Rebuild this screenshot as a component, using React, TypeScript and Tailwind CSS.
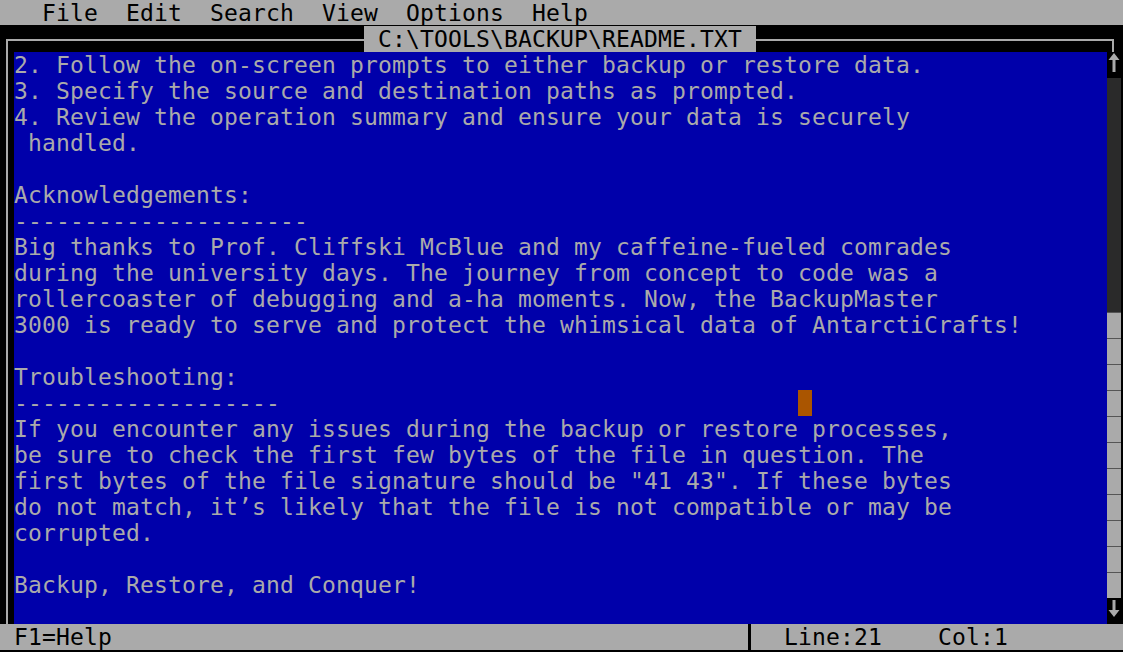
import React from 'react';

const GRAY = 'bg-[#aaaaaa]';

const LINES: string[] = [
  '2. Follow the on-screen prompts to either backup or restore data.',
  '3. Specify the source and destination paths as prompted.',
  '4. Review the operation summary and ensure your data is securely',
  ' handled.',
  '',
  'Acknowledgements:',
  '---------------------',
  'Big thanks to Prof. Cliffski McBlue and my caffeine-fueled comrades',
  'during the university days. The journey from concept to code was a',
  'rollercoaster of debugging and a-ha moments. Now, the BackupMaster',
  '3000 is ready to serve and protect the whimsical data of AntarctiCrafts!',
  '',
  'Troubleshooting:',
  '-------------------',
  'If you encounter any issues during the backup or restore processes,',
  'be sure to check the first few bytes of the file in question. The',
  'first bytes of the file signature should be "41 43". If these bytes',
  'do not match, it’s likely that the file is not compatible or may be',
  'corrupted.',
  '',
  'Backup, Restore, and Conquer!',
  '',
];

const CURSOR_ROW = 13;
const CURSOR_COL = 56;

function ArrowUp() {
  return (
    <svg width="14" height="26" viewBox="0 0 14 26" className="block">
      <polygon points="7,1 12.5,8 1.5,8" fill="#aaaaaa" />
      <rect x="5.5" y="7" width="3" height="13" fill="#aaaaaa" />
    </svg>
  );
}

function ArrowDown() {
  return (
    <svg width="14" height="26" viewBox="0 0 14 26" className="block">
      <rect x="5.5" y="2" width="3" height="11" fill="#aaaaaa" />
      <polygon points="7,19 12.5,12 1.5,12" fill="#aaaaaa" />
    </svg>
  );
}

export default function App() {
  const font = "font-['DejaVu_Sans_Mono','Liberation_Mono',monospace] text-[23px] tracking-[0.153px] leading-[26px] whitespace-pre";

  return (
    <div className={`w-[1123px] h-[652px] bg-black overflow-hidden ${font}`}>
      {/* menu bar */}
      <div className={`h-[26px] ${GRAY} text-black border-b border-black`}>
        <div className="h-[26px]">{'   File  Edit  Search  View  Options  Help'}</div>
      </div>

      {/* title row with window frame */}
      <div className="flex h-[26px]">
        <div className="w-[6px]" />
        <div className="w-[358px] h-[13px] mt-[13px] border-t-2 border-l-2 border-[#aaaaaa]" />
        <div className={`w-[392px] h-[26px] ${GRAY} text-black`}>{' C:\\TOOLS\\BACKUP\\README.TXT '}</div>
        <div className="w-[358px] h-[13px] mt-[13px] border-t-2 border-r-2 border-[#aaaaaa]" />
        <div className="w-[9px]" />
      </div>

      {/* editor body */}
      <div className="flex h-[572px]">
        <div className="w-[6px]" />
        <div className={`w-[2px] ${GRAY}`} />
        <div className="w-[6px]" />
        <div className="w-[1093px] bg-[#0000aa] text-[#aaaaaa] overflow-hidden">
          {LINES.map((line, i) => (
            <div key={i} className="h-[26px]">
              {i === CURSOR_ROW ? (
                <>
                  {line.padEnd(CURSOR_COL, ' ')}
                  <span className="inline-block w-[14px] h-[26px] align-top bg-[#aa5500]" />
                </>
              ) : (
                line || ' '
              )}
            </div>
          ))}
        </div>
        <div className="w-[14px] flex flex-col">
          <div className="h-[26px] bg-black"><ArrowUp /></div>
          <div className="h-[234px] bg-[#2a2a2a]" />
          {Array.from({ length: 11 }).map((_, i) => (
            <div key={i} className={`h-[26px] ${GRAY} border-t border-[#555555]`} />
          ))}
          <div className="h-[26px] bg-black"><ArrowDown /></div>
        </div>
        <div className="w-[2px]" />
      </div>

      {/* status bar */}
      <div className={`h-[26px] ${GRAY} text-black`}>
        {' F1=Help' + ' '.repeat(45)}
        <span className="inline-block w-[14px] h-[26px] align-top pl-[6px]">
          <span className="block w-[3px] h-[26px] bg-black" />
        </span>
        {'  Line:21    Col:1'}
      </div>
    </div>
  );
}
